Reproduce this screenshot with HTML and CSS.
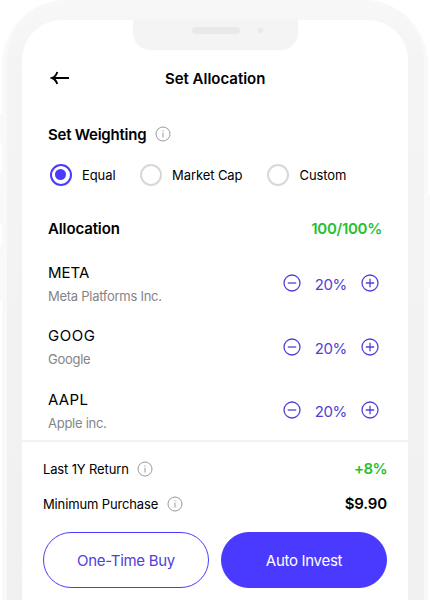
FILE: index.html
```
<!DOCTYPE html>
<html lang="en">
<head>
<meta charset="UTF-8">
<meta name="viewport" content="width=device-width, initial-scale=1.0">
<title>Set Allocation</title>
<link rel="stylesheet" href="styles.css">
</head>
<body>

<svg width="0" height="0" class="icons">
    <symbol id="info" viewBox="0 0 16 16">
        <circle cx="8" cy="8" r="7" fill="none" stroke="#999" stroke-width="1"/>
        <path d="M8 6.700v4.800M8 4.300v1.100" fill="none" stroke="#999" stroke-width="1"/>
    </symbol>
    <symbol id="minus" viewBox="0 0 18 18">
        <circle cx="9" cy="9" r="8" fill="none" stroke="#5140d8" stroke-width="1.3"/>
        <path d="M4.800 9h8.400" fill="none" stroke="#5140d8" stroke-width="1.3"/>
    </symbol>
    <symbol id="plus" viewBox="0 0 18 18">
        <circle cx="9" cy="9" r="8" fill="none" stroke="#5140d8" stroke-width="1.3"/>
        <path d="M4.800 9h8.400M9 4.800v8.400" fill="none" stroke="#5140d8" stroke-width="1.3"/>
    </symbol>
</svg>

<div class="phone">
    <span class="side-button mute"></span>
    <span class="side-button volume-up"></span>
    <span class="side-button volume-down"></span>
    <span class="side-button power"></span>
    <div class="frame">
        <div class="notch">
            <span class="speaker"></span>
            <span class="camera"></span>
        </div>
        <div class="screen">
            <div class="header">
                <svg class="back" width="20" height="14" viewBox="0 0 20 14"><path d="M19 7H2.500M7.300 1C6.300 4 5 6 2 7c3 1 4.300 3 5.300 6" fill="none" stroke="#000" stroke-width="1.900"/></svg>
                <h1>Set Allocation</h1>
            </div>

            <div class="weighting">
                <h2 class="weighting-title">Set Weighting</h2>
                <svg class="info"><use href="#info"/></svg>
            </div>
            <div class="options">
                <label class="option equal"><span class="radio checked"></span><span>Equal</span></label>
                <label class="option market"><span class="radio"></span><span>Market Cap</span></label>
                <label class="option custom"><span class="radio"></span><span>Custom</span></label>
            </div>

            <div class="allocation">
                <h2>Allocation</h2>
                <span class="total">100/100%</span>
            </div>
            <div class="stocks">
                <div class="stock">
                    <div>
                        <div class="ticker">META</div>
                        <div class="company">Meta Platforms Inc.</div>
                    </div>
                    <div class="stepper">
                        <svg><use href="#minus"/></svg>
                        <span>20%</span>
                        <svg><use href="#plus"/></svg>
                    </div>
                </div>
                <div class="stock">
                    <div>
                        <div class="ticker goog">GOOG</div>
                        <div class="company">Google</div>
                    </div>
                    <div class="stepper">
                        <svg><use href="#minus"/></svg>
                        <span>20%</span>
                        <svg><use href="#plus"/></svg>
                    </div>
                </div>
                <div class="stock">
                    <div>
                        <div class="ticker aapl">AAPL</div>
                        <div class="company">Apple inc.</div>
                    </div>
                    <div class="stepper">
                        <svg><use href="#minus"/></svg>
                        <span>20%</span>
                        <svg><use href="#plus"/></svg>
                    </div>
                </div>
            </div>

            <div class="footer">
                <div class="summary">
                    <span class="last-return">Last 1Y Return</span>
                    <svg class="info"><use href="#info"/></svg>
                    <span class="value gain">+8%</span>
                </div>
                <div class="summary">
                    <span class="minimum">Minimum Purchase</span>
                    <svg class="info"><use href="#info"/></svg>
                    <span class="value">$9.90</span>
                </div>
                <div class="buttons">
                    <button class="one-time">One-Time Buy</button>
                    <button class="auto">Auto Invest</button>
                </div>
            </div>
        </div>
    </div>
</div>

</body>
</html>
```
FILE: styles.css
```
* {
    box-sizing: border-box;
}

body {
    font-family: Inter, "Liberation Sans", sans-serif;
    background-color: #fff;
    color: #000;
    margin: 0;
    white-space: nowrap;
}

h1, h2 {
    font-size: 15px;
    font-weight: 600;
    line-height: 20px;
    margin: 0;
}

h2 {
    letter-spacing: -0.12px;
}

.icons {
    position: absolute;
}

.phone {
    position: relative;
    width: 426px;
    height: 600px;
    margin-left: 2px;
    padding: 0 4px 0 5px;
    background-color: #f9f9f9;
    border-radius: 64px 64px 0 0;
}

.frame {
    position: relative;
    height: 600px;
    padding: 20px 16px 0 15px;
    background: linear-gradient(#f8f8f8 0, #f4f4f4 60px, #f0f0f0 100%);
    border-radius: 60px 60px 0 0;
}

.side-button {
    position: absolute;
    left: -2px;
    width: 2px;
    background-color: #f9f9f9;
}

.mute {
    top: 114px;
    height: 29px;
}

.volume-up {
    top: 172px;
    height: 52px;
}

.volume-down {
    top: 246px;
    height: 54px;
}

.power {
    top: 195px;
    left: 426px;
    height: 93px;
}

.notch {
    position: absolute;
    top: 19px;
    left: 126px;
    width: 165px;
    height: 31px;
    display: flex;
    background-color: #f4f4f4;
    border-radius: 0 0 17px 17px;
}

.speaker {
    width: 48px;
    height: 7px;
    margin: 8px 0 0 59px;
    border-radius: 4px;
    background-color: #e9e9e9;
}

.camera {
    width: 5px;
    height: 5px;
    margin: 9px 0 0 18px;
    border-radius: 50%;
    background-color: #e9e9e9;
}

.screen {
    height: 580px;
    background-color: #fff;
    border-radius: 40px 40px 0 0;
    overflow: hidden;
}

.header {
    display: flex;
    align-items: center;
    height: 20px;
    margin: 49px 0 0 28px;
}

.back {
    margin-bottom: 2px;
}

.header h1 {
    margin-left: 95px;
    letter-spacing: -0.02px;
}

.weighting {
    display: flex;
    align-items: center;
    height: 20px;
    margin: 35px 0 0 26px;
}

.weighting-title {
    width: 107px;
    padding-top: 1px;
    letter-spacing: -0.24px;
}

.info {
    width: 16px;
    height: 16px;
}

.options {
    display: flex;
    height: 22px;
    margin: 19.5px 0 0 27.5px;
}

.option {
    display: flex;
    align-items: center;
    gap: 10.5px;
    font-size: 13px;
    letter-spacing: -0.08px;
}

.equal {
    width: 90px;
}

.market {
    width: 127.5px;
}

.radio {
    display: flex;
    width: 22px;
    height: 22px;
    border: 2px solid #d8d8d8;
    border-radius: 50%;
}

.checked {
    align-items: center;
    justify-content: center;
    border-color: #4a3aff;
}

.checked::after {
    content: "";
    width: 11px;
    height: 11px;
    border-radius: 50%;
    background-color: #4a3aff;
}

.allocation {
    display: flex;
    justify-content: space-between;
    margin: 33.5px 26px 0;
}

.total {
    color: #26bf32;
    font-size: 15px;
    font-weight: 600;
    line-height: 20px;
    letter-spacing: -0.28px;
}

.stocks {
    height: 201px;
    padding: 23px 29.5px 0 26px;
}

.stock {
    display: flex;
    justify-content: space-between;
    height: 63.3px;
}

.ticker {
    font-size: 15px;
    line-height: 22px;
}

.goog {
    letter-spacing: 0.5px;
}

.aapl {
    letter-spacing: 0.3px;
}

.company {
    color: #858585;
    font-size: 13px;
    line-height: 24px;
    letter-spacing: -0.27px;
}

.stepper {
    display: flex;
    align-items: center;
    width: 95.5px;
    height: 20px;
    margin-top: 11.4px;
    color: #5140d8;
    font-size: 15px;
}

.stepper svg {
    width: 18px;
    height: 18px;
}

.stepper span {
    width: 59.5px;
    padding-top: 3px;
    text-align: center;
    letter-spacing: -0.5px;
}

.footer {
    padding: 16.5px 21px 0;
    border-top: 2px solid #f2f2f2;
}

.summary {
    display: flex;
    align-items: center;
    height: 20px;
    margin-bottom: 15px;
    font-size: 13px;
    letter-spacing: -0.14px;
}

.last-return {
    width: 93.5px;
}

.minimum {
    width: 123.5px;
}

.value {
    margin-left: auto;
    font-size: 15px;
    font-weight: 600;
}

.gain {
    color: #26bf32;
    letter-spacing: -0.6px;
}

.buttons {
    display: flex;
    justify-content: space-between;
    padding-top: 3px;
}

button {
    width: 166px;
    height: 56px;
    padding: 2px 0 0;
    border: 1px solid #4a3aff;
    border-radius: 28px;
    font-family: inherit;
    font-size: 15px;
    letter-spacing: -0.3px;
}

.one-time {
    background-color: #fff;
    color: #5140d8;
}

.auto {
    background-color: #4a3aff;
    color: #fff;
}
```
